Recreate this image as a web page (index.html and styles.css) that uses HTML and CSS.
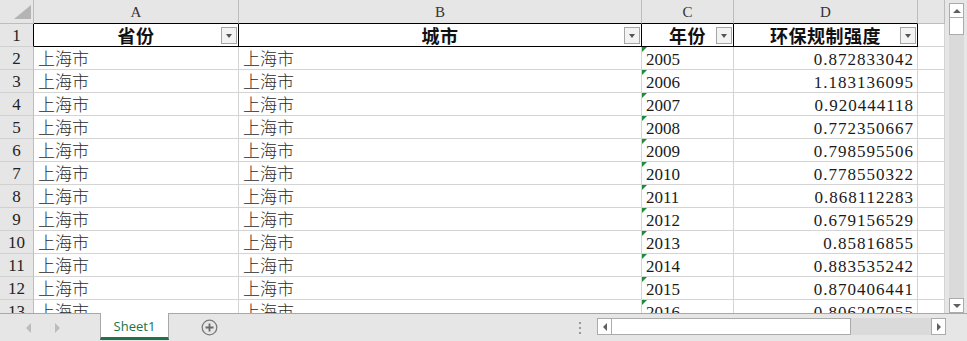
FILE: index.html
```html
<!DOCTYPE html>
<html lang="zh-CN">
<head>
    <meta charset="UTF-8">
    <title>Sheet1</title>
    <link rel="stylesheet" href="styles.css">
</head>
<body>
    <div class="app">
        <div class="main">
            <div class="sheet">
                <div class="c corner"><span class="tri"></span></div>
                <div class="c ch black-b">A</div>
                <div class="c ch black-b">B</div>
                <div class="c ch black-b">C</div>
                <div class="c ch black-b">D</div>
                <div class="c ch"></div>

                <div class="c rn black-r">1</div>
                <div class="c th">省份<span class="filter"></span></div>
                <div class="c th">城市<span class="filter"></span></div>
                <div class="c th">年份<span class="filter"></span></div>
                <div class="c th">环保规制强度<span class="filter"></span></div>
                <div class="c"></div>

                <div class="c rn">2</div><div class="c zh">上海市</div><div class="c zh">上海市</div><div class="c yr">2005</div><div class="c num">0.872833042</div><div class="c"></div>
                <div class="c rn">3</div><div class="c zh">上海市</div><div class="c zh">上海市</div><div class="c yr">2006</div><div class="c num">1.183136095</div><div class="c"></div>
                <div class="c rn">4</div><div class="c zh">上海市</div><div class="c zh">上海市</div><div class="c yr">2007</div><div class="c num">0.920444118</div><div class="c"></div>
                <div class="c rn">5</div><div class="c zh">上海市</div><div class="c zh">上海市</div><div class="c yr">2008</div><div class="c num">0.772350667</div><div class="c"></div>
                <div class="c rn">6</div><div class="c zh">上海市</div><div class="c zh">上海市</div><div class="c yr">2009</div><div class="c num">0.798595506</div><div class="c"></div>
                <div class="c rn">7</div><div class="c zh">上海市</div><div class="c zh">上海市</div><div class="c yr">2010</div><div class="c num">0.778550322</div><div class="c"></div>
                <div class="c rn">8</div><div class="c zh">上海市</div><div class="c zh">上海市</div><div class="c yr">2011</div><div class="c num">0.868112283</div><div class="c"></div>
                <div class="c rn">9</div><div class="c zh">上海市</div><div class="c zh">上海市</div><div class="c yr">2012</div><div class="c num">0.679156529</div><div class="c"></div>
                <div class="c rn">10</div><div class="c zh">上海市</div><div class="c zh">上海市</div><div class="c yr">2013</div><div class="c num">0.85816855</div><div class="c"></div>
                <div class="c rn">11</div><div class="c zh">上海市</div><div class="c zh">上海市</div><div class="c yr">2014</div><div class="c num">0.883535242</div><div class="c"></div>
                <div class="c rn">12</div><div class="c zh">上海市</div><div class="c zh">上海市</div><div class="c yr">2015</div><div class="c num">0.870406441</div><div class="c"></div>
                <div class="c rn">13</div><div class="c zh">上海市</div><div class="c zh">上海市</div><div class="c yr">2016</div><div class="c num">0.806207055</div><div class="c"></div>
            </div>
            <div class="vscroll">
                <div class="vtrack">
                    <div class="sbtn"><span class="arr up"></span></div>
                    <div class="vthumb"></div>
                    <div class="fill"></div>
                    <div class="sbtn"><span class="arr down"></span></div>
                </div>
            </div>
        </div>
        <div class="tabbar">
            <div class="nav">
                <span class="arr-nav left"></span>
                <span class="arr-nav right"></span>
            </div>
            <div class="tab">Sheet1</div>
            <div class="add">
                <svg width="17" height="17" viewBox="0 0 17 17">
                    <circle cx="8.5" cy="8.5" r="7.3" fill="none" stroke="#7a7a7a" stroke-width="1.3"/>
                    <path d="M8.5 4.5v8M4.5 8.5h8" stroke="#6a6a6a" stroke-width="1.8"/>
                </svg>
            </div>
            <div class="dots"><i></i><i></i><i></i></div>
            <div class="hscroll">
                <div class="sbtn"><span class="arr left"></span></div>
                <div class="hthumb"></div>
                <div class="fill"></div>
                <div class="sbtn"><span class="arr right"></span></div>
            </div>
        </div>
    </div>
</body>
</html>
```

FILE: styles.css
```css
body {
    margin: 0;
    overflow: hidden;
    background: #e6e6e6;
}
.app {
    width: 967px;
    height: 341px;
    display: flex;
    flex-direction: column;
}
.main {
    height: 313px;
    display: flex;
}
.sheet {
    width: 945px;
    height: 313px;
    overflow: hidden;
    background: #fff;
    display: grid;
    grid-template-columns: 34px 205px 403px 92px 184px 27px;
    grid-template-rows: 24px repeat(13, 23px);
}
.c {
    box-sizing: border-box;
    border-right: 1px solid #d4d4d4;
    border-bottom: 1px solid #d4d4d4;
    display: flex;
    align-items: center;
    padding: 0 4px;
    white-space: nowrap;
    position: relative;
    color: #1a1a1a;
    line-height: 20px;
}
.corner {
    background: #e6e6e6;
    border-right-color: #bdbdbd;
    border-bottom-color: #bdbdbd;
    justify-content: flex-end;
    align-items: flex-end;
    padding: 0 2px 4px 0;
}
.tri {
    width: 0;
    height: 0;
    border-left: 17px solid transparent;
    border-bottom: 14px solid #b4b4b4;
}
.ch {
    background: #e6e6e6;
    border-right-color: #bdbdbd;
    border-bottom-color: #bdbdbd;
    justify-content: center;
    font-family: "Liberation Serif", serif;
    font-size: 15px;
    color: #333;
    padding-top: 1px;
}
.ch.black-b {
    border-bottom-color: #000;
}
.rn {
    background: #e6e6e6;
    border-right-color: #bdbdbd;
    border-bottom-color: #d0d0d0;
    justify-content: center;
    font-family: "Liberation Serif", serif;
    font-size: 17px;
    color: #222;
    padding: 1px 0 0;
}
.rn.black-r {
    border-right-color: #000;
}
.th {
    border-right-color: #000;
    border-bottom-color: #000;
    justify-content: center;
    font-family: "Noto Sans CJK SC", sans-serif;
    font-weight: bold;
    font-size: 18px;
    letter-spacing: 0.5px;
    color: #111;
}
.filter {
    position: absolute;
    right: 1px;
    top: 3px;
    width: 16px;
    height: 17px;
    box-sizing: border-box;
    border: 1px solid #a6a6a6;
    background: #f3f3f3;
}
.filter::after {
    content: "";
    position: absolute;
    left: 4px;
    top: 6px;
    border-left: 3.5px solid transparent;
    border-right: 3.5px solid transparent;
    border-top: 4px solid #555;
}
.zh {
    font-family: "Noto Sans CJK SC", sans-serif;
    font-size: 17px;
    font-weight: 300;
    color: #2a2a2a;
}
.yr {
    font-family: "Liberation Serif", serif;
    font-size: 17px;
    padding-top: 3px;
}
.yr::before {
    content: "";
    position: absolute;
    left: 0;
    top: 0;
    border-top: 5px solid #1e8a3a;
    border-right: 5px solid transparent;
}
.num {
    justify-content: flex-end;
    font-family: "Liberation Serif", serif;
    font-size: 17px;
    letter-spacing: 1px;
    padding: 3px 3px 0 4px;
}
.vscroll {
    width: 22px;
    box-sizing: border-box;
    padding: 3px 3px 0 4px;
    display: flex;
}
.vtrack {
    flex: 1;
    background: #dadada;
    display: flex;
    flex-direction: column;
}
.sbtn {
    width: 15px;
    height: 15px;
    box-sizing: border-box;
    border: 1px solid #ababab;
    background: #fff;
    display: flex;
    align-items: center;
    justify-content: center;
}
.vthumb {
    height: 17px;
    box-sizing: border-box;
    border: 1px solid #ababab;
    border-top: none;
    background: #fff;
}
.fill {
    flex: 1;
}
.arr {
    width: 0;
    height: 0;
}
.arr.up {
    border-left: 4px solid transparent;
    border-right: 4px solid transparent;
    border-bottom: 4px solid #606060;
}
.arr.down {
    border-left: 4px solid transparent;
    border-right: 4px solid transparent;
    border-top: 4px solid #606060;
}
.arr.left {
    border-top: 4px solid transparent;
    border-bottom: 4px solid transparent;
    border-right: 4px solid #606060;
}
.arr.right {
    border-top: 4px solid transparent;
    border-bottom: 4px solid transparent;
    border-left: 4px solid #606060;
}
.tabbar {
    height: 28px;
    box-sizing: border-box;
    border-top: 1px solid #a8a8a8;
    display: flex;
    align-items: flex-start;
}
.nav {
    width: 100px;
    height: 27px;
    display: flex;
    align-items: center;
    gap: 24px;
    padding-left: 26px;
    box-sizing: border-box;
}
.arr-nav {
    width: 0;
    height: 0;
    border-top: 5px solid transparent;
    border-bottom: 5px solid transparent;
}
.arr-nav.left {
    border-right: 5px solid #bcbcbc;
}
.arr-nav.right {
    border-left: 5px solid #bcbcbc;
}
.tab {
    width: 69px;
    height: 27px;
    margin-top: -1px;
    box-sizing: border-box;
    background: #fff;
    border-left: 1px solid #a8a8a8;
    border-right: 1px solid #a8a8a8;
    border-bottom: 3px solid #217346;
    font-family: "Open Sans", "Noto Sans", sans-serif;
    font-size: 13px;
    color: #217346;
    display: flex;
    align-items: center;
    justify-content: center;
    padding-top: 1px;
}
.add {
    padding: 5px 0 0 32px;
    height: 27px;
    box-sizing: border-box;
}
.dots {
    margin-left: auto;
    width: 3px;
    height: 27px;
    display: flex;
    flex-direction: column;
    justify-content: center;
    gap: 3px;
    margin-right: 15px;
}
.dots i {
    width: 2px;
    height: 2px;
    background: #9a9a9a;
}
.hscroll {
    width: 349px;
    height: 17px;
    margin-top: 4px;
    margin-right: 21px;
    display: flex;
    background: #dadada;
}
.hscroll .sbtn {
    height: 17px;
}
.hthumb {
    width: 239px;
    box-sizing: border-box;
    border: 1px solid #ababab;
    border-left: none;
    background: #fff;
}
```
